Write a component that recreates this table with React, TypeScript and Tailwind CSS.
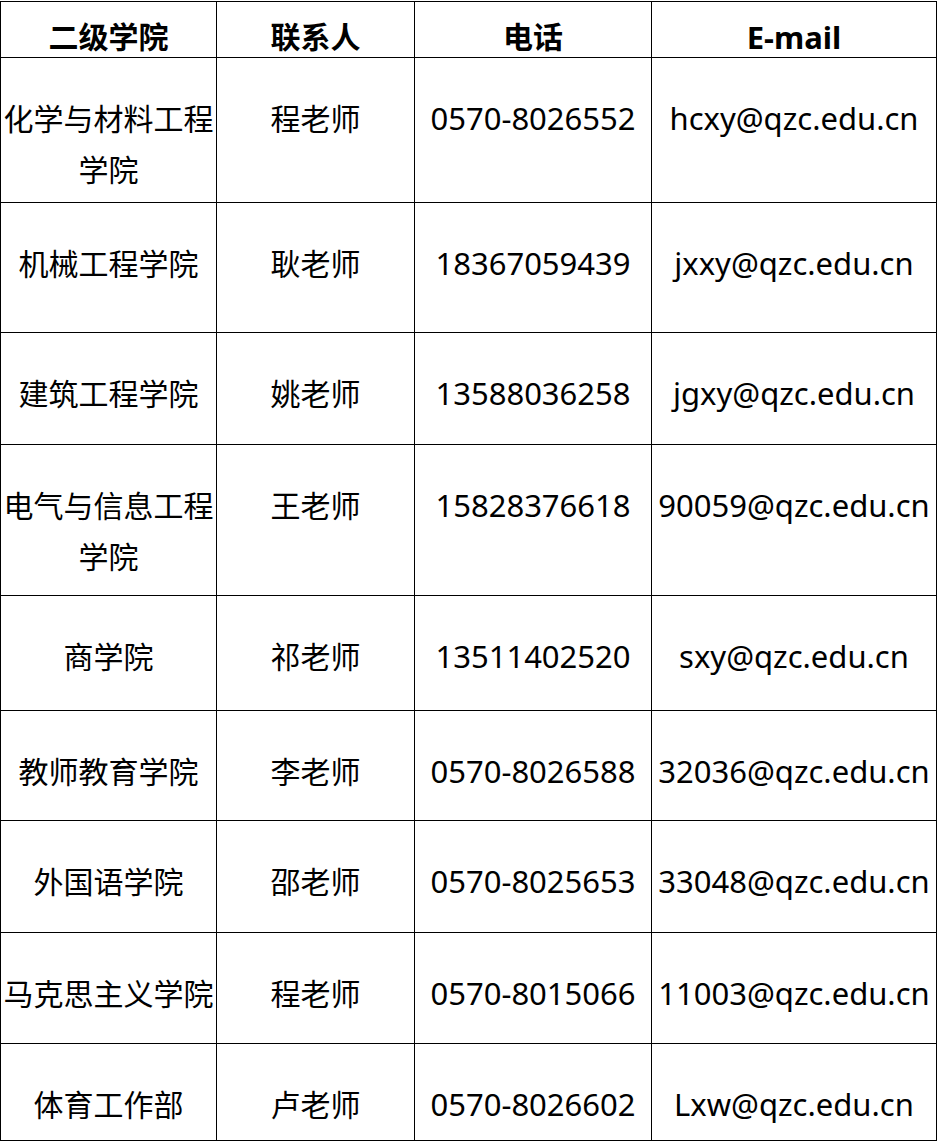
import React from 'react';

type Row = {
  college: string[];
  contact: string;
  phone: string;
  email: string;
  h: string;
};

const rows: Row[] = [
  { college: ['化学与材料工程', '学院'], contact: '程老师', phone: '0570-8026552', email: 'hcxy@qzc.edu.cn', h: 'h-[145px]' },
  { college: ['机械工程学院'], contact: '耿老师', phone: '18367059439', email: 'jxxy@qzc.edu.cn', h: 'h-[130px]' },
  { college: ['建筑工程学院'], contact: '姚老师', phone: '13588036258', email: 'jgxy@qzc.edu.cn', h: 'h-[112px]' },
  { college: ['电气与信息工程', '学院'], contact: '王老师', phone: '15828376618', email: '90059@qzc.edu.cn', h: 'h-[151px]' },
  { college: ['商学院'], contact: '祁老师', phone: '13511402520', email: 'sxy@qzc.edu.cn', h: 'h-[115px]' },
  { college: ['教师教育学院'], contact: '李老师', phone: '0570-8026588', email: '32036@qzc.edu.cn', h: 'h-[110px]' },
  { college: ['外国语学院'], contact: '邵老师', phone: '0570-8025653', email: '33048@qzc.edu.cn', h: 'h-[112px]' },
  { college: ['马克思主义学院'], contact: '程老师', phone: '0570-8015066', email: '11003@qzc.edu.cn', h: 'h-[111px]' },
  { college: ['体育工作部'], contact: '卢老师', phone: '0570-8026602', email: 'Lxw@qzc.edu.cn', h: 'h-[97px]' },
];

const cell = 'border-r border-b border-black text-center whitespace-nowrap overflow-hidden';

const App: React.FC = () => {
  return (
    <div className="w-[938px] h-[1141px] bg-white pt-px text-black font-['Noto_Sans','Noto_Sans_CJK_SC',sans-serif]">
      <div className="w-[937px] border-l border-t border-black">
        {/* Header */}
        <div className="grid grid-cols-[216px_198px_237px_285px] h-[56px] font-bold text-[30px] leading-[50px]">
          <div className={`${cell} pt-[10px]`}>二级学院</div>
          <div className={`${cell} pt-[10px]`}>联系人</div>
          <div className={`${cell} pt-[10px]`}>电话</div>
          <div className={`${cell} pt-[10px] text-[31px]`}>E-mail</div>
        </div>

        {/* Body */}
        {rows.map((r, i) => (
          <div key={i} className={`grid grid-cols-[216px_198px_237px_285px] ${r.h} leading-[51px]`}>
            <div className={`${cell} pt-[35px] text-[30px]`}>
              {r.college.map((line, j) => (
                <div key={j}>{line}</div>
              ))}
            </div>
            <div className={`${cell} pt-[35px] text-[30px]`}>{r.contact}</div>
            <div className={`${cell} pt-[35px] text-[31px]`}>{r.phone}</div>
            <div className={`${cell} pt-[35px] text-[31px]`}>{r.email}</div>
          </div>
        ))}
      </div>
    </div>
  );
};

export default App;
